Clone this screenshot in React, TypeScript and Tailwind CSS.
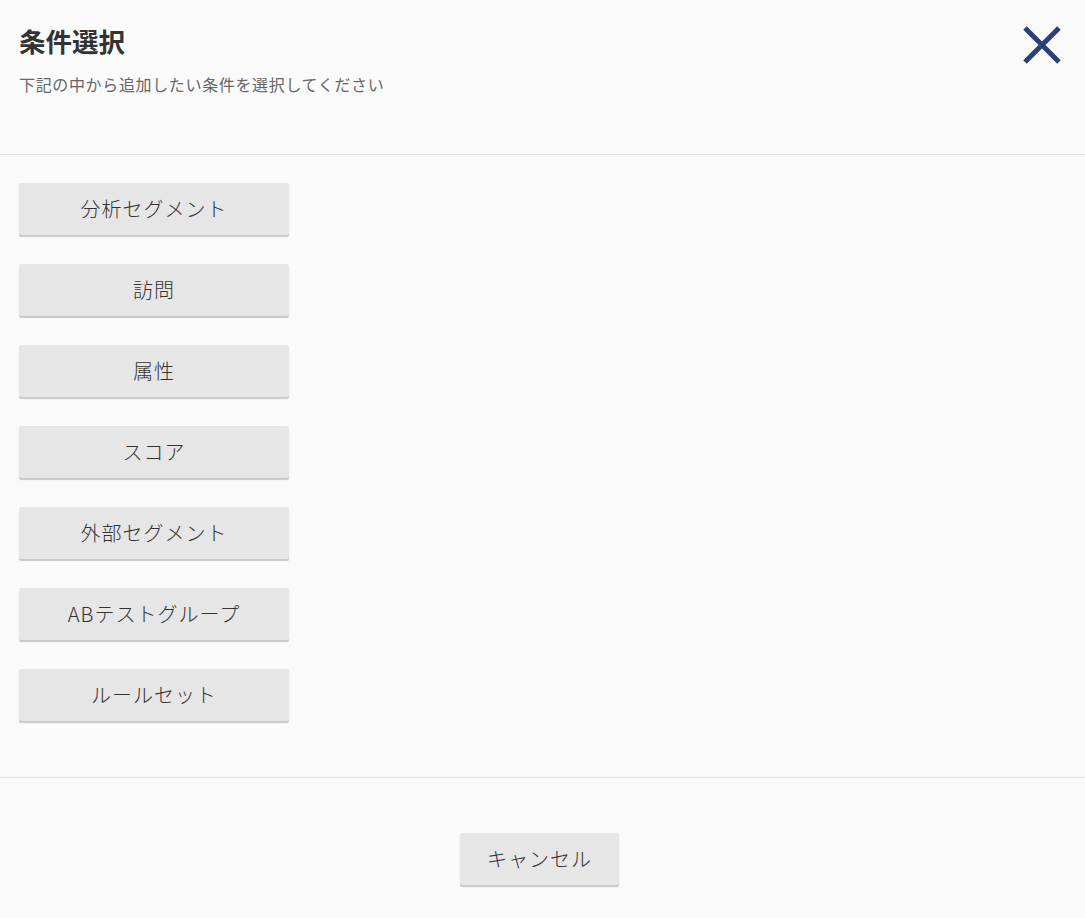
import React from "react";

const items = ["分析セグメント", "訪問", "属性", "スコア", "外部セグメント", "ABテストグループ", "ルールセット"];

export default function App() {
  return (
    <div
      className="w-[1085px] h-[918px] bg-[#fafafa] flex flex-col text-[#333]"
      style={{ fontFamily: '"Noto Sans CJK JP", "Noto Sans", sans-serif' }}
    >
      <div className="h-[155px] shrink-0 flex justify-between px-[19px] pt-[22px] border-b border-[#e0e0e0]">
        <div className="flex flex-col">
          <h1 className="text-[26.5px] leading-[38px] font-bold text-[#333]">条件選択</h1>
          <p className="mt-[12px] text-[16px] leading-[24px] text-[#666] tracking-[0.65px]">下記の中から追加したい条件を選択してください</p>
        </div>
        <button className="w-[44px] h-[44px] mt-[1px] mr-[2px] flex items-center justify-center">
          <svg width="40" height="40" viewBox="0 0 40 40">
            <path d="M3 3 L37 37 M37 3 L3 37" stroke="#2d3f78" strokeWidth="5" fill="none" />
          </svg>
        </button>
      </div>
      <div className="flex-1 flex flex-col gap-[29px] px-[19px] pt-[28px] border-b border-[#e0e0e0]">
        {items.map((t) => (
          <button
            key={t}
            className="w-[270px] h-[52px] bg-[#e6e6e6] rounded-[2px] shadow-[0_2px_1px_rgba(0,0,0,0.2)] text-[20px] font-light text-[#333] flex items-center justify-center tracking-[1px]"
          >
            {t}
          </button>
        ))}
      </div>
      <div className="h-[140px] shrink-0 flex justify-center pt-[55px] pr-[6px]">
        <button className="w-[159px] h-[52px] bg-[#e6e6e6] rounded-[2px] shadow-[0_2px_1px_rgba(0,0,0,0.2)] text-[20px] font-light text-[#333] flex items-center justify-center tracking-[1px]">
          キャンセル
        </button>
      </div>
    </div>
  );
}
